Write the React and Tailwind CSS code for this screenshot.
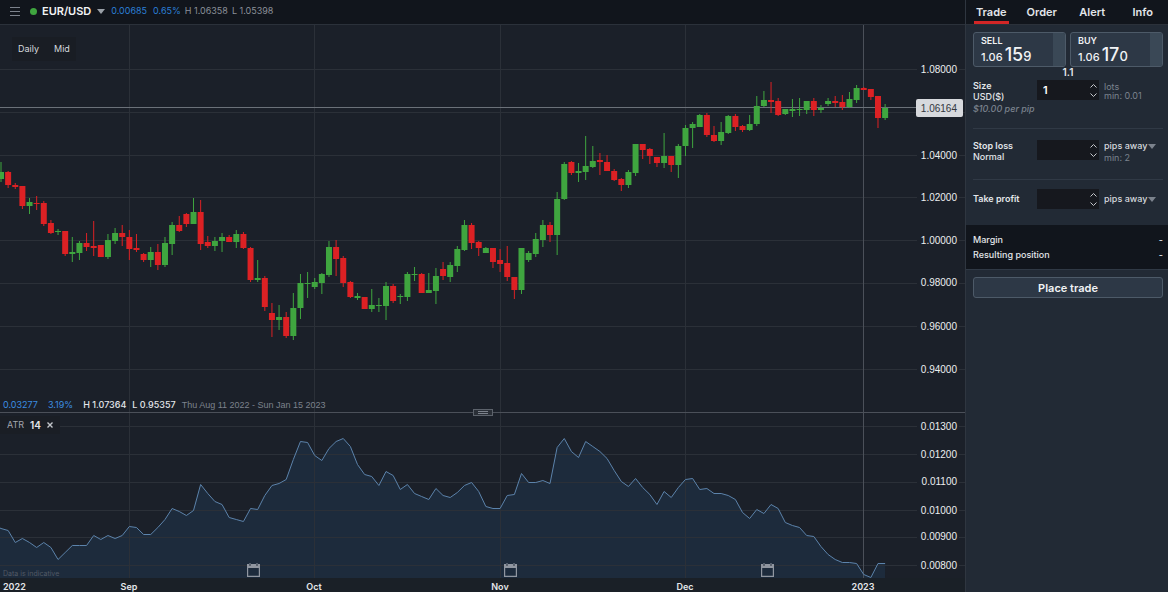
import { useState } from 'react'

const CHART_W = 965
const STEP = 7.13

// [direction, body top, body bottom, high, low] in chart units, u = up, d = down
const CANDLES = [
  ['u', 172, 179, 162, 182], ['d', 172, 185, 171, 188], ['d', 185, 187, 183, 189], ['d', 186, 206, 186, 209],
  ['u', 202, 206, 198, 214], ['d', 203, 204, 196, 210], ['d', 203, 224, 201, 226], ['d', 223, 233, 220, 234],
  ['u', 231, 232, 229, 235], ['d', 231, 254, 231, 256], ['u', 252, 254, 237, 262], ['u', 243, 253, 241, 260],
  ['d', 243, 247, 233, 251], ['d', 246, 248, 221, 256], ['d', 245, 257, 245, 257], ['u', 240, 257, 234, 259],
  ['u', 233, 241, 228, 244], ['d', 233, 237, 225, 246], ['d', 237, 249, 230, 260], ['d', 248, 250, 234, 252],
  ['d', 254, 260, 253, 262], ['u', 252, 260, 247, 267], ['d', 252, 265, 244, 270], ['u', 243, 265, 237, 267],
  ['u', 225, 244, 222, 255], ['d', 225, 231, 216, 232], ['d', 214, 224, 213, 227], ['u', 212, 224, 198, 224],
  ['d', 212, 244, 200, 250], ['d', 242, 246, 236, 248], ['u', 241, 246, 237, 251], ['u', 237, 241, 233, 252],
  ['d', 237, 242, 235, 242], ['u', 234, 242, 230, 248], ['d', 234, 248, 232, 249], ['d', 248, 280, 247, 282],
  ['u', 278, 280, 260, 282], ['d', 278, 307, 276, 311], ['d', 313, 320, 303, 337], ['u', 317, 320, 305, 330],
  ['d', 317, 336, 312, 338], ['u', 308, 336, 293, 340], ['u', 283, 308, 274, 319], ['u', 283, 284, 272, 298],
  ['u', 282, 287, 278, 289], ['u', 274, 283, 273, 294], ['u', 247, 275, 241, 277], ['d', 247, 259, 240, 276],
  ['d', 258, 283, 256, 287], ['d', 282, 297, 281, 298], ['u', 296, 298, 293, 300], ['d', 297, 309, 297, 309],
  ['u', 305, 309, 289, 312], ['u', 305, 306, 298, 312], ['u', 286, 306, 282, 320], ['d', 286, 301, 284, 303],
  ['u', 296, 297, 294, 304], ['u', 274, 297, 272, 301], ['u', 274, 275, 267, 281], ['d', 274, 293, 273, 293],
  ['u', 290, 293, 273, 293], ['u', 276, 291, 268, 304], ['d', 269, 276, 262, 280], ['u', 265, 277, 262, 282],
  ['u', 249, 266, 246, 272], ['u', 225, 250, 220, 251], ['d', 225, 243, 223, 249], ['d', 242, 248, 241, 256],
  ['u', 248, 253, 247, 253], ['d', 248, 262, 248, 268], ['d', 260, 264, 249, 272], ['d', 263, 277, 246, 281],
  ['d', 277, 290, 277, 299], ['u', 248, 290, 248, 294], ['u', 253, 260, 251, 262], ['u', 239, 254, 233, 257],
  ['u', 225, 240, 220, 247], ['d', 225, 235, 222, 242], ['u', 199, 235, 192, 255], ['u', 164, 199, 162, 200],
  ['d', 162, 173, 161, 175], ['u', 171, 173, 163, 182], ['u', 166, 172, 136, 180], ['u', 161, 167, 146, 168],
  ['d', 160, 162, 153, 175], ['d', 162, 171, 155, 171], ['d', 171, 180, 169, 181], ['d', 179, 185, 178, 191],
  ['u', 172, 185, 170, 188], ['u', 144, 173, 144, 176], ['d', 144, 150, 144, 159], ['d', 149, 156, 148, 164],
  ['d', 157, 163, 157, 167], ['u', 156, 163, 133, 168], ['d', 156, 165, 156, 172], ['u', 146, 165, 144, 178],
  ['u', 128, 146, 125, 156], ['u', 124, 128, 122, 148], ['u', 115, 127, 114, 127], ['d', 115, 135, 113, 137],
  ['d', 135, 141, 126, 142], ['u', 132, 141, 122, 145], ['u', 116, 133, 115, 134], ['d', 116, 127, 114, 131],
  ['d', 126, 130, 125, 132], ['u', 124, 130, 115, 131], ['u', 106, 124, 96, 126], ['u', 100, 106, 91, 107],
  ['d', 100, 102, 82, 113], ['d', 101, 115, 98, 116], ['u', 109, 114, 109, 115], ['u', 109, 111, 99, 117],
  ['u', 109, 110, 98, 116], ['u', 101, 110, 101, 114], ['d', 101, 110, 98, 116], ['u', 108, 110, 105, 113],
  ['u', 101, 104, 98, 106], ['d', 101, 103, 96, 107], ['d', 102, 107, 95, 110], ['u', 99, 107, 92, 108],
  ['u', 88, 100, 85, 103], ['d', 88, 90, 87, 90], ['d', 89, 97, 89, 100], ['d', 96, 118, 96, 128],
  ['u', 108, 118, 104, 120],
]

const ATR = [
  528, 530, 542, 538, 542, 547, 542, 547, 559, 552, 545, 545, 545, 535, 539, 535, 538, 535, 526, 527,
  534, 534, 527, 519, 508, 511, 515, 510, 484, 493, 501, 504, 517, 519, 521, 508, 509, 495, 485, 483,
  479, 459, 441, 442, 455, 460, 448, 441, 438, 446, 464, 474, 476, 485, 471, 475, 489, 484, 493, 496,
  499, 488, 495, 497, 492, 485, 482, 491, 506, 508, 508, 495, 494, 473, 482, 482, 480, 483, 447, 438,
  451, 457, 441, 446, 451, 458, 470, 481, 486, 478, 487, 494, 504, 491, 497, 487, 479, 478, 489, 488,
  493, 493, 495, 499, 512, 518, 509, 513, 504, 508, 522, 525, 527, 535, 536, 546, 554, 559, 562, 562,
  563, 574, 577, 563, 563,
]

const MONTHS = [
  { label: 'Sep', x: 129 },
  { label: 'Oct', x: 314 },
  { label: 'Nov', x: 500 },
  { label: 'Dec', x: 685 },
  { label: '2023', x: 863 },
]

const PRICES = [
  ['1.08000', 69], ['', 112], ['1.04000', 155], ['1.02000', 197],
  ['1.00000', 240], ['0.98000', 283], ['0.96000', 326], ['0.94000', 369],
]

const ATR_LEVELS = [
  ['0.01300', 426], ['0.01200', 454], ['0.01100', 482],
  ['0.01000', 510], ['0.00900', 537], ['0.00800', 565],
]

const EVENTS = [253, 510, 767]
const TABS = ['Trade', 'Order', 'Alert', 'Info']

const barX = i => 1 + i * STEP
const pctX = x => `${(x / CHART_W) * 100}%`
const pctY = (y, top, height) => `${((y - top) / height) * 100}%`

function Grid({ levels, top, height }) {
  return (
    <g shapeRendering="crispEdges">
      {levels.map(([, y]) => (
        <line key={y} x1="0" x2={CHART_W} y1={y + 0.5} y2={y + 0.5} stroke="#2b3038" />
      ))}
      {MONTHS.map(m => (
        <line key={m.x} x1={m.x + 0.5} x2={m.x + 0.5} y1={top} y2={top + height}
          stroke={m.label === '2023' ? '#4b5059' : '#2b3038'} />
      ))}
    </g>
  )
}

function AxisLabels({ levels, top, height }) {
  return levels.filter(([label]) => label).map(([label, y]) => (
    <g key={label}>
      <rect x={pctX(917)} y={pctY(y - 5, top, height)} width="42" height="11" fill="#1b2029" />
      <text x={pctX(957)} y={pctY(y, top, height)} textAnchor="end" dominantBaseline="central"
        className="fill-[#eceef0] font-['Liberation_Sans',sans-serif] text-[10px]">{label}</text>
    </g>
  ))
}

function PriceChart() {
  const top = 25
  const height = 387
  return (
    <svg className="w-full min-h-0 flex-[387_1_0px] bg-[#1b2029]" role="img" aria-label="EUR/USD daily candles">
      <svg width="100%" height="100%" viewBox={`0 ${top} ${CHART_W} ${height}`} preserveAspectRatio="none">
        <Grid levels={PRICES} top={top} height={height} />
        <line x1="0" x2="916" y1="107.5" y2="107.5" stroke="#6b7179" />
        {CANDLES.map(([dir, bodyTop, bodyBottom, high, low], i) => {
          const color = dir === 'u' ? '#3fa53f' : '#dc2124'
          return (
            <g key={i} fill={color}>
              <rect x={barX(i) - 0.5} y={high} width="1" height={low - high} />
              <rect x={barX(i) - 3} y={bodyTop} width="6" height={bodyBottom - bodyTop} />
            </g>
          )
        })}
      </svg>
      <AxisLabels levels={PRICES} top={top} height={height} />
      <svg x={pctX(916)} y={pctY(99, top, height)} width="47" height="18">
        <rect width="47" height="18" rx="2" fill="#d7d9dd" />
        <text x="41" y="9" textAnchor="end" dominantBaseline="central"
          className="fill-[#33373d] font-['Liberation_Sans',sans-serif] text-[10px]">1.06164</text>
      </svg>
    </svg>
  )
}

function AtrChart() {
  const top = 413
  const height = 165
  const line = ATR.map((y, i) => `${barX(i)},${y + 0.5}`).join(' L')
  return (
    <svg className="w-full min-h-0 flex-[165_1_0px] bg-[#1b2029]" role="img" aria-label="Average true range">
      <svg width="100%" height="100%" viewBox={`0 ${top} ${CHART_W} ${height}`} preserveAspectRatio="none">
        <path d={`M0,578 L0,528 L${line} L885,578 Z`} fill="#1d2b3c" />
        <Grid levels={ATR_LEVELS} top={top} height={height} />
        <path d={`M0,528 L${line}`} fill="none" stroke="#5c83ab" strokeWidth="1" />
      </svg>
      <AxisLabels levels={ATR_LEVELS} top={top} height={height} />
      {EVENTS.map(x => (
        <svg key={x} x={pctX(x - 6)} y={pctY(563, top, height)} width="13" height="14" fill="#9096a0">
          <path fillRule="evenodd" d="M0 1h2v1.5h2V1h5v1.5h2V1h2v13H0V1zm1.2 4v7.8h10.6V5H1.2z" />
          <path d="M2.5 0h1v2h-1zM9.5 0h1v2h-1z" />
        </svg>
      ))}
      <text x="3" y={pctY(573, top, height)} dominantBaseline="central"
        className="fill-[#525a66] text-[7px]">Data is indicative</text>
    </svg>
  )
}

function TimeAxis() {
  return (
    <svg className="h-3.5 w-full bg-[#1a2027]">
      <text x="3" y="8" dominantBaseline="central" className="fill-[#e4e6ea] text-[9px] font-semibold">2022</text>
      {MONTHS.map(m => (
        <text key={m.label} x={pctX(m.x)} y="8" textAnchor="middle" dominantBaseline="central"
          className="fill-[#e4e6ea] text-[9px] font-semibold">{m.label}</text>
      ))}
    </svg>
  )
}

function Caret({ className }) {
  return (
    <svg viewBox="0 0 8 5" className={`h-[5px] w-2 ${className}`} fill="currentColor">
      <path d="M0 0h8L4 5z" />
    </svg>
  )
}

function PriceButton({ side, big, small }) {
  return (
    <button className="flex h-[35px] flex-1 overflow-hidden rounded-[3px] border border-[#4d5a68] bg-[#2d3846] text-left text-[#f1f3f5]">
      <span className="flex-1 pl-[7px]">
        <span className="block pt-[3px] text-[9px] leading-[10px] font-semibold">{side}</span>
        <span className="flex items-baseline leading-[18px]">
          <span className="text-[11px] font-medium">1.06</span>
          <span className="pl-0.5 text-[18px] font-medium">{big}</span>
          <span className="text-[13px] font-medium">{small}</span>
        </span>
      </span>
      <span className="w-3 self-stretch bg-[#3a4856]" />
    </button>
  )
}

function NumberField({ id, label, value, onChange }) {
  const bump = n => onChange(String(Math.max(0, Number(value || 0) + n)))
  return (
    <div className="flex h-5 w-[62px] bg-[#16181e]">
      <input id={id} type="text" inputMode="decimal" value={value} onChange={e => onChange(e.target.value)}
        className="w-0 flex-1 bg-transparent pl-1.5 text-[11px] font-semibold text-white outline-none" />
      <div className="flex w-3 flex-col items-center justify-center gap-[5px]">
        <button aria-label={`Increase ${label}`} onClick={() => bump(1)}>
          <svg viewBox="0 0 7 4" className="h-1 w-[7px]" fill="none" stroke="#c3c6cb"><path d="M.5 3.5l3-3 3 3" /></svg>
        </button>
        <button aria-label={`Decrease ${label}`} onClick={() => bump(-1)}>
          <svg viewBox="0 0 7 4" className="h-1 w-[7px]" fill="none" stroke="#c3c6cb"><path d="M.5 .5l3 3 3-3" /></svg>
        </button>
      </div>
    </div>
  )
}

function UnitSelect({ label }) {
  return (
    <div className="flex items-center">
      <select aria-label={label} className="w-11 appearance-none bg-transparent text-[9px] leading-3 font-medium text-[#d5d9de] outline-none">
        <option>pips away</option>
        <option>price</option>
      </select>
      <Caret className="text-[#7c838d]" />
    </div>
  )
}

function TradePanel() {
  const [tab, setTab] = useState('Trade')
  const [size, setSize] = useState('1')
  const [stop, setStop] = useState('')
  const [profit, setProfit] = useState('')

  return (
    <aside className="flex w-[203px] shrink-0 flex-col border-l border-[#2f3640] bg-[#222a35] text-[#e3e6ea]">
      <nav className="grid h-[25px] grid-cols-4 border-b border-[#2b313a] bg-[#11151c]">
        {TABS.map(t => (
          <button key={t} onClick={() => setTab(t)}
            className={`mx-2 flex justify-center border-b-[3px] pt-1 text-[11px] font-semibold ${t === tab ? 'border-[#d32626]' : 'border-transparent'}`}>
            {t}
          </button>
        ))}
      </nav>

      <div className="flex flex-col pr-[5px] pl-[7px]">
        <div className="flex gap-1 pt-[7px]">
          <PriceButton side="SELL" big="15" small="9" />
          <PriceButton side="BUY" big="17" small="0" />
        </div>
        <p className="text-center text-[10px] leading-[11px] font-semibold">1.1</p>

        <div className="flex h-[51px] items-start border-b border-[#303945] pt-0.5">
          <label htmlFor="size" className="w-16 text-[9px] leading-[11px] font-medium whitespace-nowrap">
            <span className="block font-semibold">Size</span>
            <span className="block">USD($)</span>
            <span className="block pt-px text-[#7b838e] italic">$10.00 per pip</span>
          </label>
          <NumberField id="size" label="size" value={size} onChange={setSize} />
          <p className="pt-0.5 pl-[5px] text-[9px] leading-[9px] text-[#7b838e]">lots<br />min: 0.01</p>
        </div>

        <div className="flex h-[51px] items-start border-b border-[#303945] pt-[11px]">
          <label htmlFor="stop" className="w-16 text-[9px] leading-[11px] font-medium">
            <span className="block font-semibold">Stop loss</span>
            <span className="block">Normal</span>
          </label>
          <NumberField id="stop" label="stop loss" value={stop} onChange={setStop} />
          <div className="pl-[5px]">
            <UnitSelect label="Stop loss unit" />
            <p className="text-[9px] leading-3 text-[#7b838e]">min: 2</p>
          </div>
        </div>

        <div className="flex h-[45px] items-start pt-[9px]">
          <label htmlFor="profit" className="w-16 text-[9px] leading-5 font-semibold">Take profit</label>
          <NumberField id="profit" label="take profit" value={profit} onChange={setProfit} />
          <div className="pt-1 pl-[5px]">
            <UnitSelect label="Take profit unit" />
          </div>
        </div>
      </div>

      <dl className="grid grid-cols-[1fr_auto] border-b border-[#303945] bg-[#11151c] pt-[7px] pr-[5px] pb-[7px] pl-[7px] text-[9px] leading-[15px] font-medium">
        <dt>Margin</dt>
        <dd>-</dd>
        <dt>Resulting position</dt>
        <dd>-</dd>
      </dl>

      <div className="flex pt-[7px] pr-[5px] pl-[7px]">
        <button className="h-[21px] w-full rounded-[3px] border border-[#4d5a68] bg-[#2d3846] text-[11px] leading-4 font-semibold text-[#f1f3f5]">
          Place trade
        </button>
      </div>
    </aside>
  )
}

export default function App() {
  return (
    <div className="flex min-h-screen bg-[#1b2029] font-['Inter','Liberation_Sans',sans-serif]">
      <main className="flex min-w-0 flex-1 flex-col">
        <header className="flex h-[25px] items-center border-b border-[#2b313a] bg-[#11151c] pb-0.5 pl-2.5 text-[9px]">
          <button aria-label="Menu" className="mr-2.5">
            <svg viewBox="0 0 10 9" className="h-[9px] w-2.5" stroke="#7c828c"><path d="M0 .5h10M0 4.5h10M0 8.5h10" /></svg>
          </button>
          <span className="mr-[5px] size-[7px] rounded-full bg-[#3fa53f]" />
          <button className="flex items-center gap-1.5 text-[11px] font-semibold text-[#f1f3f5]">
            EUR/USD
            <Caret className="text-[#9aa0a8]" />
          </button>
          <span className="ml-1.5 text-[#2b7fd6]">0.00685</span>
          <span className="ml-1.5 text-[#2b7fd6]">0.65%</span>
          <span className="ml-1 text-[#8b9099]">H 1.06358</span>
          <span className="ml-1 text-[#8b9099]">L 1.05398</span>
        </header>

        <section className="relative flex flex-1 flex-col">
          <PriceChart />
          <div className="relative h-px bg-[#4b5059]">
            <div className="absolute top-[-3px] left-1/2 flex h-[7px] w-5 -translate-x-1/2 items-center justify-center border border-[#5c626b] bg-[#2a2f37]">
              <span className="h-[3px] w-2.5 border-y border-[#7c828c]" />
            </div>
            {/* range summary sits just above the splitter */}
            <div className="absolute bottom-0.5 left-[3px] flex text-[9px] leading-3 font-medium whitespace-nowrap text-[#e4e6ea]">
              <span className="mr-2.5 font-normal text-[#3b8de0]">0.03277</span>
              <span className="mr-2.5 font-normal text-[#3b8de0]">3.19%</span>
              <span className="mr-1.5">H 1.07364</span>
              <span className="mr-1.5">L 0.95357</span>
              <span className="font-['Liberation_Sans',sans-serif] font-normal text-[#7c828c]">Thu Aug 11 2022 - Sun Jan 15 2023</span>
            </div>
            <div className="absolute top-1 left-0 flex h-[18px] items-center bg-[#1a1e25] px-[7px] text-[9px]">
              <span className="mr-1.5 text-[#a2a7af]">ATR</span>
              <span className="mr-1.5 text-[10px] font-semibold text-[#e4e6ea]">14</span>
              <button aria-label="Remove ATR">
                <svg viewBox="0 0 6 6" className="size-1.5" stroke="#c3c6cb" strokeWidth="1.4"><path d="M.5 .5l5 5M5.5 .5l-5 5" /></svg>
              </button>
            </div>
          </div>
          <AtrChart />
          <TimeAxis />
          <div className="absolute top-3 left-3 flex h-6 items-center gap-[15px] bg-[#191d24] px-1.5 text-[9px] text-[#d5d9de]">
            <button>Daily</button>
            <button>Mid</button>
          </div>
        </section>
      </main>
      <TradePanel />
    </div>
  )
}
